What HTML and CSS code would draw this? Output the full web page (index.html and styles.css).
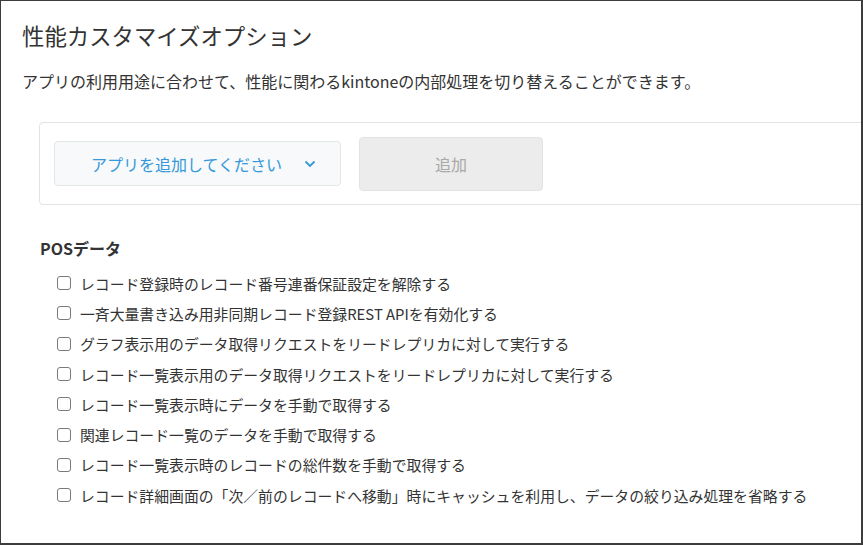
FILE: index.html
```html
<!DOCTYPE html>
<html>
  <head>
    <meta charset="utf-8" />
    <title>性能カスタマイズオプション</title>
    <link rel="stylesheet" href="styles.css">
  </head>
  <body>
    <div class="frame">
      <h1>性能カスタマイズオプション</h1>
      <p class="description">アプリの利用用途に合わせて、性能に関わるkintoneの内部処理を切り替えることができます。</p>

      <div class="app-panel">
        <button class="app-select">
          <span>アプリを追加してください</span>
          <svg class="chevron" width="12" height="8" viewBox="0 0 12 8">
            <path d="M1.5 1.5 L6 6 L10.5 1.5" fill="none" stroke="currentColor" stroke-width="1.8" />
          </svg>
        </button>
        <button class="add-button" disabled>追加</button>
      </div>

      <h2 class="section-title">POSデータ</h2>
      <ul class="option-list">
        <li><label><input type="checkbox" />レコード登録時のレコード番号連番保証設定を解除する</label></li>
        <li><label><input type="checkbox" />一斉大量書き込み用非同期レコード登録REST APIを有効化する</label></li>
        <li><label><input type="checkbox" />グラフ表示用のデータ取得リクエストをリードレプリカに対して実行する</label></li>
        <li><label><input type="checkbox" />レコード一覧表示用のデータ取得リクエストをリードレプリカに対して実行する</label></li>
        <li><label><input type="checkbox" />レコード一覧表示時にデータを手動で取得する</label></li>
        <li><label><input type="checkbox" />関連レコード一覧のデータを手動で取得する</label></li>
        <li><label><input type="checkbox" />レコード一覧表示時のレコードの総件数を手動で取得する</label></li>
        <li><label><input type="checkbox" />レコード詳細画面の「次／前のレコードへ移動」時にキャッシュを利用し、データの絞り込み処理を省略する</label></li>
      </ul>
    </div>
  </body>
</html>
```

FILE: styles.css
```css
body {
  margin: 0;
  font-family: "Noto Sans CJK JP", "Noto Sans", sans-serif;
  color: #333;
  background-color: #fff;
}

.frame {
  box-sizing: border-box;
  height: 545px;
  padding-left: 21px;
  border: 1px solid #3c3c3c;
  border-right-width: 2px;
  border-bottom-width: 2px;
  overflow: hidden;
}

h1 {
  margin: 18px 0 0;
  font-size: 22.4px;
  font-weight: normal;
  line-height: 32px;
}

.description {
  margin: 18px 0 0;
  font-size: 16px;
  line-height: 24px;
}

.app-panel {
  display: flex;
  align-items: center;
  gap: 18px;
  height: 55px;
  margin: 29px -20px 0 17px;
  padding: 13px 14px;
  border: 1px solid #e3e3e3;
  border-radius: 4px;
}

.app-select {
  display: flex;
  align-items: center;
  justify-content: space-between;
  box-sizing: border-box;
  width: 287px;
  height: 45px;
  padding: 0 24px 0 36px;
  font-family: inherit;
  font-size: 16px;
  color: #3498db;
  background-color: #f7f9fa;
  border: 1px solid #e3e7e8;
  border-radius: 4px;
}

.add-button {
  box-sizing: border-box;
  width: 184px;
  height: 54px;
  font-family: inherit;
  font-size: 16px;
  color: #a8a8a8;
  background-color: #ececec;
  border: 1px solid #e3e3e3;
  border-radius: 4px;
}

.section-title {
  margin: 31px 0 0 18px;
  font-size: 16px;
  font-weight: bold;
  line-height: 24px;
}

.option-list {
  list-style: none;
  margin: 8px 0 0 35px;
  padding: 0;
}

.option-list li {
  height: 30.3px;
  display: flex;
  align-items: center;
}

.option-list label {
  display: flex;
  align-items: center;
  font-size: 14.85px;
}

input[type="checkbox"] {
  appearance: none;
  box-sizing: border-box;
  width: 14px;
  height: 14px;
  margin: 0 9px 0 0;
  border: 1px solid #7a7a7a;
  border-radius: 3px;
  background-color: #fff;
}
```
